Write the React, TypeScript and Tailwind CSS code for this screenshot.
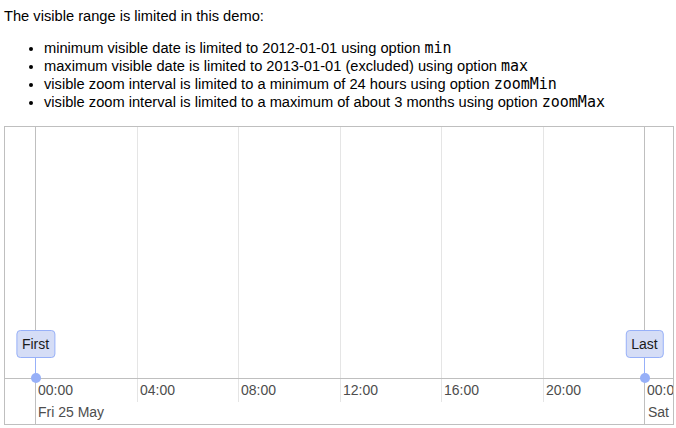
import * as React from "react";

const STEP = 101.5;
const ORIGIN = 30;
const AXIS_TOP = 251;

const minorLabels = ["00:00", "04:00", "08:00", "12:00", "16:00", "20:00", "00:00"];

const items = [
  { id: 1, content: "First", at: 0 },
  { id: 2, content: "Last", at: 6 },
];

const Code = ({ children }: { children: React.ReactNode }) => (
  <code className="font-['DejaVu_Sans_Mono',monospace] text-[15px]">{children}</code>
);

const Timeline = () => {
  return (
    <div className="relative h-[299px] w-[670px] overflow-hidden border border-[#bfbfbf] bg-white font-['Liberation_Sans',Arial,sans-serif] text-[14px] leading-[16px]">
      {/* grid lines */}
      {minorLabels.map((label, i) => {
        const x = Math.round(ORIGIN + i * STEP);
        const major = i === 0 || i === 6;
        return (
          <React.Fragment key={i}>
            <div
              className={major ? "absolute top-0 bottom-0 w-px bg-[#bfbfbf]" : "absolute top-0 h-[275px] w-px bg-[#e5e5e5]"}
              style={{ left: x }}
            />
            <div className="absolute top-[255px] whitespace-nowrap text-[#4d4d4d]" style={{ left: x + 3 }}>
              {label}
            </div>
          </React.Fragment>
        );
      })}

      {/* major labels */}
      <div className="absolute left-[33px] top-[277px] whitespace-nowrap text-[#4d4d4d]">Fri 25 May</div>
      <div className="absolute left-[643px] top-[277px] whitespace-nowrap text-[#4d4d4d]">Sat</div>

      {/* axis */}
      <div className="absolute left-0 right-0 h-px bg-[#bfbfbf]" style={{ top: AXIS_TOP }} />

      {/* items */}
      {items.map((item) => {
        const x = Math.round(ORIGIN + item.at * STEP);
        return (
          <React.Fragment key={item.id}>
            <div className="absolute top-[231px] h-[20px] w-px bg-[#97b0f8]" style={{ left: x }} />
            <div
              className="absolute top-[246px] size-[10px] rounded-full bg-[#97b0f8]"
              style={{ left: x - 4.5 }}
            />
            <div
              className="absolute top-[203px] -translate-x-1/2 rounded-[4px] border border-[#97b0f8] bg-[#d5ddf6] px-[5px] py-[5px] whitespace-nowrap text-[#1a1a1a]"
              style={{ left: x + 0.5 }}
            >
              {item.content}
            </div>
          </React.Fragment>
        );
      })}
    </div>
  );
};

export default function App() {
  return (
    <div className="h-[428px] w-[676px] overflow-hidden bg-white pl-[4px] font-['Liberation_Sans',Arial,sans-serif] text-[14.67px] leading-[normal] text-black">
      <p className="pt-[8px]">The visible range is limited in this demo:</p>
      <ul className="mt-[15px] list-disc pl-[40px]">
        <li>
          minimum visible date is limited to 2012-01-01 using option <Code>min</Code>
        </li>
        <li>
          maximum visible date is limited to 2013-01-01 (excluded) using option <Code>max</Code>
        </li>
        <li>
          visible zoom interval is limited to a minimum of 24 hours using option <Code>zoomMin</Code>
        </li>
        <li>
          visible zoom interval is limited to a maximum of about 3 months using option <Code>zoomMax</Code>
        </li>
      </ul>
      <div className="mt-[15px]">
        <Timeline />
      </div>
    </div>
  );
}
